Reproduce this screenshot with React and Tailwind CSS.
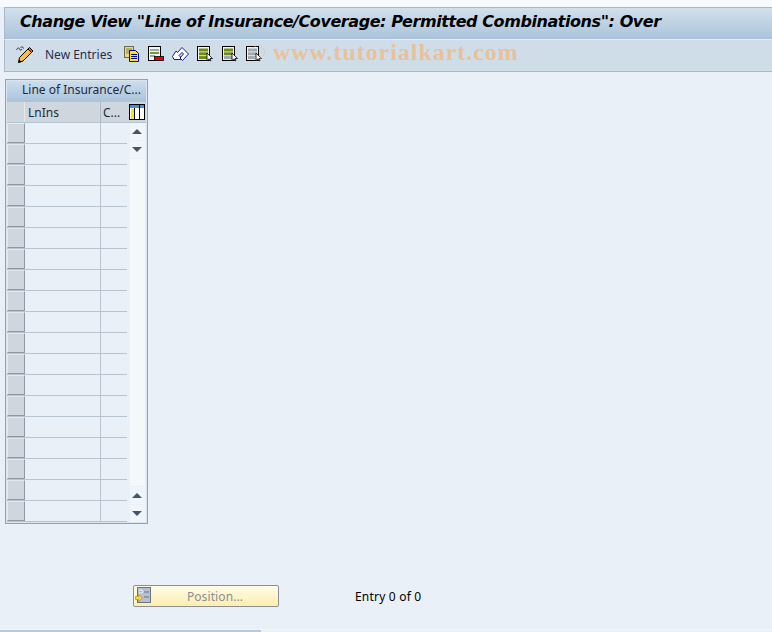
import React from "react";

const rows = Array.from({ length: 19 }, (_, i) => i);

function PencilIcon() {
  return (
    <svg width="18" height="17" viewBox="0 0 18 17" className="block">
      <path d="M3.500 11.500L12 3l3.500 3.500L7 15l-4.500 1.500z" fill="#f9c23c" stroke="#000" strokeWidth="1" />
      <path d="M12 3l1.500-1.500 3.500 3.500-1.500 1.500z" fill="#f0603a" stroke="#000" strokeWidth="1" />
      <path d="M2.500 16.500l.6-3 2.400 2.400z" fill="#000" />
      <path d="M0.500 4c1-2.500 2.500-2.500 3-1s2 1.500 2.500 0M4.500 1.500c1.500-1 3-.5 3 1" fill="none" stroke="#333" strokeWidth="1" />
    </svg>
  );
}

function CopyIcon() {
  return (
    <svg width="16" height="16" viewBox="0 0 16 16" className="block">
      <rect x="0.500" y="0.500" width="9" height="11" fill="#f0d878" stroke="#6a6a50" />
      <path d="M2 3h6M2 5h6M2 7h3" stroke="#8a8050" />
      <path d="M5.500 4.500h6l3 3v8h-9z" fill="#ffe800" stroke="#000090" />
      <path d="M7 8.500h6M7 10.500h6M7 12.500h6" stroke="#000090" strokeWidth="1" />
    </svg>
  );
}

function DeleteIcon() {
  return (
    <svg width="16" height="16" viewBox="0 0 16 16" className="block">
      <rect x="0.500" y="0.500" width="12" height="14" fill="#f4f6f6" stroke="#000" />
      <rect x="2" y="3" width="9" height="2" fill="#98a8b0" />
      <rect x="2" y="6" width="9" height="2" fill="#7d9a20" />
      <rect x="2" y="9" width="5" height="2" fill="#98a8b0" />
      <rect x="6.500" y="10.500" width="9" height="4" fill="#e80010" stroke="#000" strokeWidth="0.800" />
    </svg>
  );
}

function UndoIcon() {
  return (
    <svg width="17" height="16" viewBox="0 0 17 16" className="block">
      <path d="M0.500 10.500L4 5l1.500 1.500L10 1.500l6.500 6.500-6 6.500-2.500-2.500 3.500-4-1.500-1.500-3 3L8.500 11v2.500H2z" fill="#fff" stroke="#000090" strokeWidth="0.900" />
    </svg>
  );
}

function SelectIcon({ kind }) {
  const green = "#6f8c10";
  const gray = "#98a8b0";
  const bars = kind === "all" ? [green, green, green] : kind === "block" ? [green, green, gray] : [gray, gray, gray];
  return (
    <svg width="16" height="16" viewBox="0 0 16 16" className="block">
      <rect x="0.500" y="0.500" width="12" height="14" fill="#f4f6f6" stroke="#000" />
      {bars.map((c, i) => (
        <rect key={i} x="2" y={2.500 + i * 3.800} width="9" height="3" fill={c} />
      ))}
      <path d="M10 7v7.500l2-1.500 1 2 1-.5-1-2h2.500z" fill="#fff" stroke="#000" strokeWidth="0.800" />
    </svg>
  );
}

function ColumnsIcon() {
  return (
    <svg width="16" height="16" viewBox="0 0 16 16" className="block">
      <rect x="0.500" y="0.500" width="15" height="15" fill="#fff" stroke="#000" />
      <rect x="1" y="1" width="14" height="3" fill="#4f8fc8" />
      <rect x="2" y="5" width="3.500" height="10" fill="#ffe800" />
      <path d="M5.500 4v11M10.500 1v14" stroke="#000" strokeWidth="1" />
    </svg>
  );
}

function PositionIcon() {
  return (
    <svg width="17" height="17" viewBox="0 0 17 17" className="block">
      <rect x="2.500" y="0.500" width="13" height="15" fill="#b8c0d0" stroke="#6c7480" />
      <path d="M9 5h5M9 10h5" stroke="#6c7480" />
      <path d="M4 3h3l1 1.500-1 1.500H4" fill="none" stroke="#eef" />
      <path d="M0.500 9.500h3v-2l4 3.500-4 3.500v-2h-3z" fill="#f4d860" stroke="#b89820" strokeWidth="0.800" />
    </svg>
  );
}

function ScrollBtn({ up }) {
  return (
    <div className="w-[15px] h-[17px] bg-[#f0f5fa] flex items-center justify-center">
      <div
        className={
          up
            ? "w-0 h-0 border-x-[5px] border-x-transparent border-b-[5px] border-b-[#44566a]"
            : "w-0 h-0 border-x-[5px] border-x-transparent border-t-[5px] border-t-[#44566a]"
        }
      />
    </div>
  );
}

export default function App() {
  return (
    <div className="w-[772px] h-[632px] overflow-hidden bg-[#e9f0f7] flex flex-col font-['Noto_Sans',sans-serif] text-[12px]">
      <div className="h-[7px] bg-[#f6f9fd]" />

      <div className="ml-[4px] border-l border-t border-[#a9b9c9] h-[32px] bg-gradient-to-b from-[#d2e0ec] to-[#aac3da] flex items-center pl-[15px] pb-[4px]">
        <h1 className="font-['DejaVu_Sans',sans-serif] font-bold italic text-[16px] tracking-[-0.43px] text-black whitespace-nowrap">
          Change View "Line of Insurance/Coverage: Permitted Combinations": Over
        </h1>
      </div>

      <div className="ml-[4px] border-l border-t border-b border-t-[#e4edf5] border-l-[#a9b9c9] border-b-[#a9b9c9] h-[33px] bg-[#cfdde9] flex items-center pl-[11px] pb-[3px]">
        <PencilIcon />
        <span className="ml-[11px] pt-[2px] text-[#1f2f4a] w-[79px] whitespace-nowrap">New Entries</span>
        <div className="flex items-center gap-[8px]">
          <CopyIcon />
          <DeleteIcon />
          <UndoIcon />
          <SelectIcon kind="all" />
          <div className="ml-px">
            <SelectIcon kind="block" />
          </div>
          <div className="relative">
            <SelectIcon kind="none" />
            {/* faint circle from the watermark, lies over the icon */}
            <svg width="16" height="16" viewBox="0 0 16 16" className="absolute left-[4px] top-[-2px]">
              <circle cx="8" cy="8" r="6.500" fill="none" stroke="#ebbd8e" strokeWidth="1" strokeDasharray="2 1" opacity="0.8" />
            </svg>
          </div>
        </div>
        <span className="ml-[11px] pb-[4px] font-['Liberation_Serif',serif] font-bold text-[24px] tracking-[0.95px] text-[#e9c19a] whitespace-nowrap">
          www.tutorialkart.com
        </span>
      </div>

      <div className="ml-[5px] mt-[7px] w-[143px] h-[445px] border border-[#8aa4bc] bg-[#dbe5ef] p-px flex flex-col">
        <div className="h-[21px] bg-gradient-to-b from-[#cddded] to-[#a9c3da] flex items-center pl-[15px] pb-[4px] text-[#1c2a3c] whitespace-nowrap">
          Line of Insurance/C...
        </div>
        <div className="flex h-[21px] bg-[#cfd6dd] border-b border-[#b4c3d2]">
          <div className="w-[18px] border-r border-[#e4e9ee]" />
          <div className="w-[76px] border-r border-[#aab8c6] pl-[3px] pt-[2px] flex items-center text-[#1c2a3c]">LnIns</div>
          <div className="w-[27px] pl-[2px] pt-[2px] flex items-center text-[#1c2a3c]">C...</div>
          <div className="flex items-center pl-[1px]">
            <ColumnsIcon />
          </div>
        </div>
        <div className="flex flex-1 bg-[#e9f0f7]">
          <div className="w-[120px] flex flex-col">
            {rows.map((r) => (
              <div key={r} className="flex h-[21px] border-b border-[#b8c4d0]">
                <div className="w-[18px] bg-[#cfd6dd] border border-[#e4e9ee] border-r-[#8d99a5] border-b-[#8d99a5]" />
                <div className="w-[76px] border-r border-[#b8c4d0]" />
                <div className="w-[26px]" />
              </div>
            ))}
          </div>
          <div className="flex-1 flex flex-col items-center pl-[1px]">
            <ScrollBtn up />
            <div className="h-px" />
            <ScrollBtn />
            <div className="w-[15px] flex-1 bg-[#f4f8fb] my-px" />
            <ScrollBtn up />
            <div className="h-px" />
            <ScrollBtn />
          </div>
        </div>
      </div>

      <div className="flex items-center mt-[60px] h-[24px]">
        <div className="ml-[133px] w-[146px] h-[22px] border border-[#8f8f8f] rounded-[2px] bg-gradient-to-b from-[#fffbe6] to-[#fdeeb0] relative flex items-center justify-center text-[#8a8f94]">
          <span className="absolute left-[1px] top-[1px]">
            <PositionIcon />
          </span>
          <span className="pl-[18px] pt-[1px] tracking-[0.1px]">Position...</span>
        </div>
        <span className="ml-[76px] pt-[2px] text-black tracking-[0.2px]">Entry 0 of 0</span>
      </div>

      <div className="mt-auto h-[1px] bg-[#f1f5fa]" />
      <div className="h-[2px] w-[261px] bg-[#b9c9d9]" />
    </div>
  );
}
